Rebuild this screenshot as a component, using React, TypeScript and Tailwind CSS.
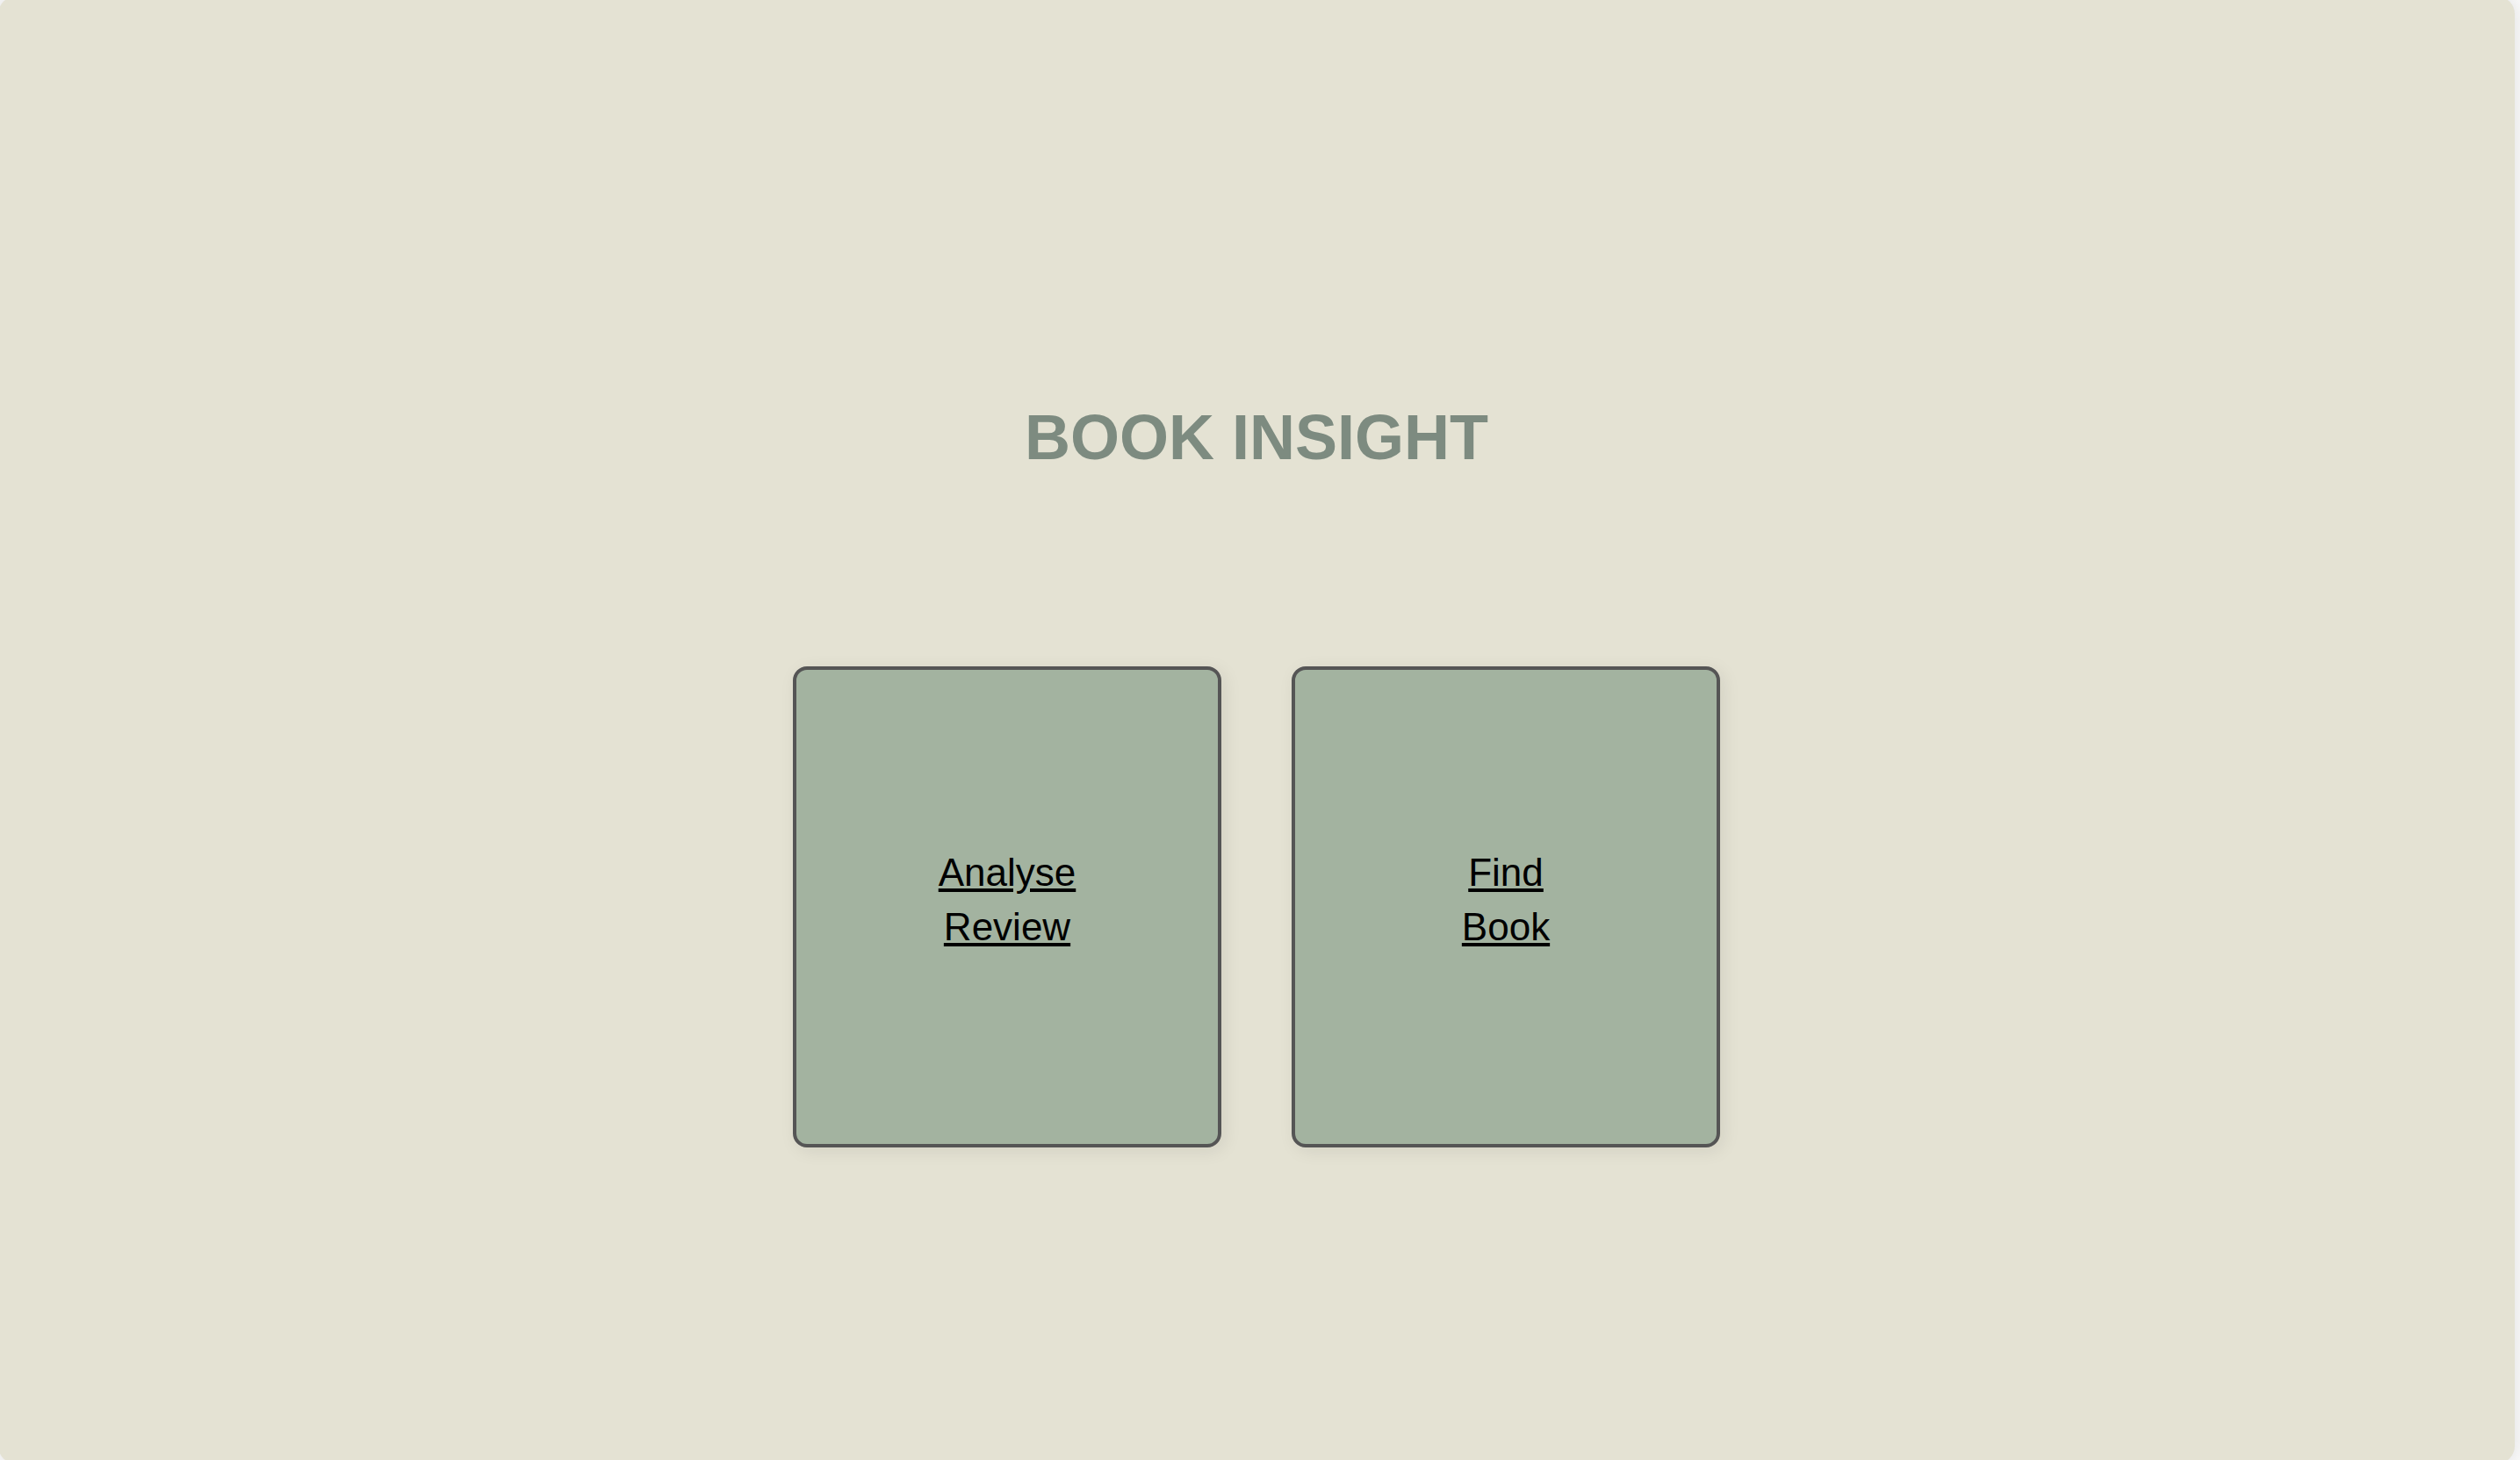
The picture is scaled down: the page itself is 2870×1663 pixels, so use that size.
const actions = [
  { href: '#analyse', lines: ['Analyse', 'Review'] },
  { href: '#find', lines: ['Find', 'Book'] },
];

export default function App() {
  return (
    <div className="flex h-screen overflow-hidden bg-[#f9f9f9] pr-1.5 font-['Liberation_Sans',Arial,sans-serif]">
      <main className="-my-1 -ml-0.5 flex flex-1 flex-col items-center justify-center rounded-[20px] bg-[#e4e2d3] pt-[92px] shadow-[0_0_20px_rgba(0,0,0,0.1)]">
        <h1 className="text-[72px] leading-[100px] font-bold text-[#7d8b80]">BOOK INSIGHT</h1>
        <nav className="mt-[211px] flex gap-20">
          {actions.map((action) => (
            <a
              key={action.href}
              href={action.href}
              className="flex h-[548px] w-[488px] flex-col items-center justify-center rounded-[16px] border-4 border-[#555555] bg-[#a3b3a0] pb-4 text-[44px] leading-[62px] text-black underline shadow-[4px_4px_20px_rgba(0,0,0,0.08)]"
            >
              {action.lines.map((line) => (
                <span key={line}>{line}</span>
              ))}
            </a>
          ))}
        </nav>
      </main>
    </div>
  );
}
